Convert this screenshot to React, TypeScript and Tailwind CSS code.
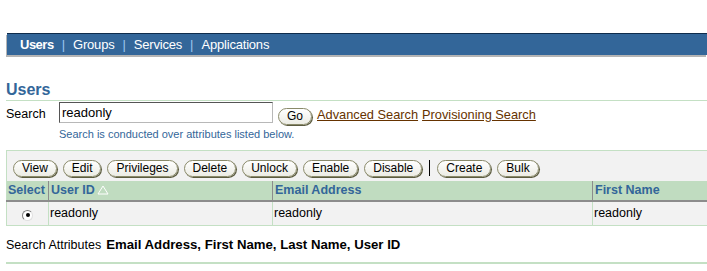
import React from "react";

const tabs = ["Users", "Groups", "Services", "Applications"];
const actions = ["View", "Edit", "Privileges", "Delete", "Unlock", "Enable", "Disable"];

const Btn = ({ label }: { label: string }) => (
  <button
    type="button"
    className="h-[17px] px-[8px] rounded-[9px] border border-[#8a8a6a] shadow-[1px_1px_0_#5c5c40] bg-gradient-to-b from-white to-[#ecece4] text-[12px] leading-[15px] text-black"
  >
    {label}
  </button>
);

const Radio = () => (
  <span className="inline-flex items-center justify-center w-[11px] h-[11px] rounded-full bg-white border border-t-[#808080] border-l-[#808080] border-r-[#e0e0e0] border-b-[#e0e0e0]">
    <span className="w-[4px] h-[4px] rounded-full bg-black" />
  </span>
);

export default function App() {
  return (
    <div className="w-[707px] h-[271px] overflow-hidden bg-white text-black font-['Liberation_Sans',Arial,sans-serif]">
      {/* tab bar */}
      <div className="pt-[33px] pl-[7px]">
        <div className="h-[22px] bg-[#336699] border-t border-[#0f2c4c] shadow-[-1px_2px_0_#b4b4b4] flex items-center pl-[13px] pt-[1px] text-[13px] text-white">
          {tabs.map((t, i) => (
            <React.Fragment key={t}>
              {i > 0 && <span className="text-[#9cc8f0] mx-[8px]">|</span>}
              <span className={i === 0 ? "font-bold tracking-[-0.5px]" : "tracking-[-0.2px]"}>{t}</span>
            </React.Fragment>
          ))}
        </div>
      </div>

      {/* heading */}
      <div className="ml-[6px] mt-[24px] border-b border-[#c4e0c4] h-[22px]">
        <h1 className="text-[16px] font-bold text-[#336699] leading-[21px]">Users</h1>
      </div>

      {/* search */}
      <div className="ml-[6px] mt-[1px] flex items-end h-[21px]">
        <span className="w-[53px] text-[12.5px] -mb-[1px]">Search</span>
        <input
          readOnly
          value="readonly"
          className="w-[214px] h-[21px] border border-t-[#555] border-l-[#555] border-r-[#b8b8b8] border-b-[#b8b8b8] px-[2px] text-[13px] outline-none"
        />
        <span className="ml-[5px] -mb-[4px]">
          <Btn label="Go" />
        </span>
        <a className="ml-[5px] -mb-[1px] text-[12.8px] text-[#663300] underline" href="#!">Advanced Search</a>
        <a className="ml-[4px] -mb-[1px] text-[12.8px] text-[#663300] underline" href="#!">Provisioning Search</a>
      </div>
      <div className="ml-[59px] mt-[4px] text-[11px] text-[#336699] leading-[14px]">
        Search is conducted over attributes listed below.
      </div>

      {/* results */}
      <div className="ml-[6px] mt-[9px] border-t border-[#c4e0c4] w-[760px]">
        <div className="bg-[#f2f2f2] border-l border-[#c4e0c4] h-[30px] flex items-start gap-[6px] pl-[6px] pt-[9px]">
          {actions.map((a) => (
            <Btn key={a} label={a} />
          ))}
          <span className="w-px h-[16px] bg-black mx-[1px]" />
          <Btn label="Create" />
          <Btn label="Bulk" />
        </div>
        <table className="border-collapse text-[12.5px] table-fixed w-[760px]">
          <colgroup>
            <col className="w-[42px]" />
            <col className="w-[224px]" />
            <col className="w-[320px]" />
            <col />
          </colgroup>
          <thead>
            <tr className="bg-[#c0dcc0] text-[#336699] font-bold h-[19px]">
              <th className="text-left pl-[1px] border-l border-[#c4e0c4] border-r border-r-[#8c8c8c] border-b-2 border-b-[#8c8c8c]">Select</th>
              <th className="text-left pl-[2px] border-r border-r-[#8c8c8c] border-b-2 border-b-[#8c8c8c]">
                <span className="inline-flex items-center gap-[2px]">
                  User ID
                  <svg width="12" height="10" viewBox="0 0 12 10">
                    <polygon points="6,1 11,9 1,9" fill="none" stroke="#ffffff" strokeWidth="1" />
                  </svg>
                </span>
              </th>
              <th className="text-left pl-[2px] border-r border-r-[#8c8c8c] border-b-2 border-b-[#8c8c8c]">Email Address</th>
              <th className="text-left pl-[2px] border-b-2 border-b-[#8c8c8c]">First Name</th>
            </tr>
          </thead>
          <tbody>
            <tr className="bg-[#f2f2f2] h-[25px] font-normal">
              <td className="border border-[#c4e0c4] text-center align-middle">
                <span className="inline-flex -mt-[4px]">
                  <Radio />
                </span>
              </td>
              <td className="border border-[#c4e0c4] pl-[1px]">readonly</td>
              <td className="border border-[#c4e0c4] pl-[1px]">readonly</td>
              <td className="border border-[#c4e0c4] pl-[1px]">readonly</td>
            </tr>
          </tbody>
        </table>
      </div>

      {/* attributes */}
      <div className="ml-[6px] mt-[11px] text-[12.5px] leading-[15px]">
        Search Attributes<span className="ml-[5px] font-bold text-[13.2px]">Email Address, First Name, Last Name, User ID</span>
      </div>
      <div className="ml-[6px] mt-[9px] border-t-2 border-[#c4e0c4]" />
    </div>
  );
}
